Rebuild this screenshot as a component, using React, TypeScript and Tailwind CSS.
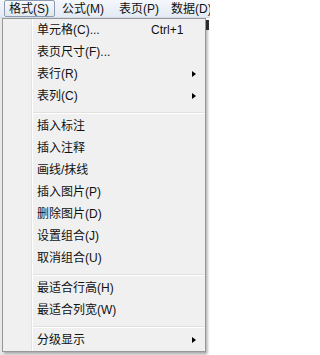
import React from "react";

type Item =
  | { type: "item"; label: string; shortcut?: string; sub?: boolean }
  | { type: "sep" };

const items: Item[] = [
  { type: "item", label: "单元格(C)...", shortcut: "Ctrl+1" },
  { type: "item", label: "表页尺寸(F)..." },
  { type: "item", label: "表行(R)", sub: true },
  { type: "item", label: "表列(C)", sub: true },
  { type: "sep" },
  { type: "item", label: "插入标注" },
  { type: "item", label: "插入注释" },
  { type: "item", label: "画线/抹线" },
  { type: "item", label: "插入图片(P)" },
  { type: "item", label: "删除图片(D)" },
  { type: "item", label: "设置组合(J)" },
  { type: "item", label: "取消组合(U)" },
  { type: "sep" },
  { type: "item", label: "最适合行高(H)" },
  { type: "item", label: "最适合列宽(W)" },
  { type: "sep" },
  { type: "item", label: "分级显示", sub: true },
];

export default function App() {
  return (
    <div
      className="relative w-[210px] h-[355px] overflow-hidden bg-[#e8e8e8] text-[12px] text-[#111]"
      style={{ fontFamily: '"Liberation Sans", "Noto Sans CJK SC", sans-serif' }}
    >
      {/* menu bar */}
      <div className="flex h-[18px] items-center whitespace-nowrap bg-gradient-to-b from-[#f4f7fb] to-[#e4ebf5] border-b border-[#d5dce6]">
        <div className="ml-[4px] flex h-[17px] w-[51px] shrink-0 items-center rounded-[2px] border border-[#8d9cb2] bg-gradient-to-b from-[#f7f9fc] to-[#e1e8f1] pl-[4px] leading-none">
          格式(S)
        </div>
        <div className="ml-[7px] shrink-0 leading-none">公式(M)</div>
        <div className="ml-[15px] shrink-0 leading-none">表页(P)</div>
        <div className="ml-[12px] shrink-0 leading-none">数据(D)</div>
      </div>

      {/* sheet area visible behind the menu */}
      <div className="flex h-[337px]">
        <div className="w-[2px] bg-[#e8e8e8]" />
        <div className="flex-1" />
        <div className="flex w-[4px] flex-col bg-white">
          <div className="mt-[2px] h-[10px] w-[3px] bg-[#333]" />
        </div>
      </div>

      {/* dropdown menu */}
      <div className="absolute left-[2px] top-[18px] flex w-[204px] h-[334px] border border-[#979797] bg-[#f0f0f0] shadow-[2px_2px_2px_rgba(0,0,0,0.25)]">
        <div className="w-[29px] shrink-0 border-r border-r-[#e2e3e3]" />
        <div className="flex flex-1 flex-col border-l border-l-white">
          {items.map((it, i) =>
            it.type === "sep" ? (
              <div key={i} className="h-[8px] pr-[1px]">
                <div className="mt-[5px] h-px bg-[#e0e0e0]" />
                <div className="h-px bg-white" />
              </div>
            ) : (
              <div
                key={i}
                className="flex h-[22px] items-center pl-[4px] pr-[9px] whitespace-nowrap leading-none"
              >
                <span className="w-[114px] shrink-0">{it.label}</span>
                {it.shortcut && <span>{it.shortcut}</span>}
                <span className="flex-1" />
                {it.sub && (
                  <span className="h-0 w-0 border-y-[3.5px] border-l-[4px] border-y-transparent border-l-black" />
                )}
              </div>
            )
          )}
        </div>
      </div>
    </div>
  );
}
